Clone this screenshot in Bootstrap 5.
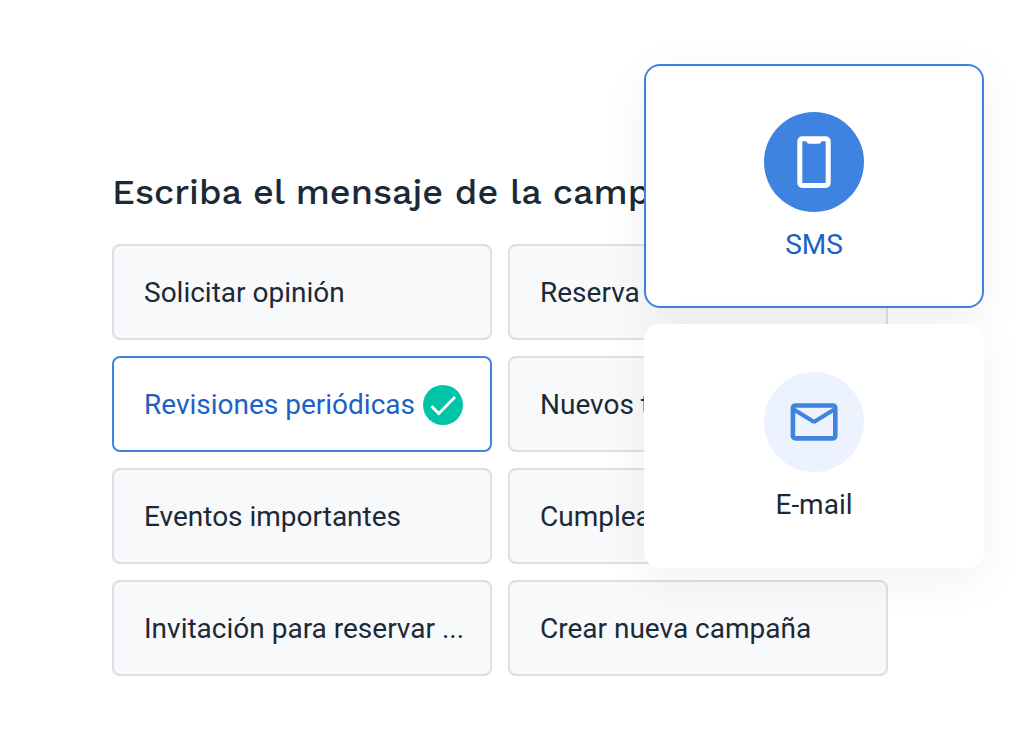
<!DOCTYPE html>
<html lang="es">
<head>
<meta charset="utf-8">
<meta name="viewport" content="width=device-width, initial-scale=1">
<title>Campaña</title>
<link href="https://cdn.jsdelivr.net/npm/bootstrap@5.3.0/dist/css/bootstrap.min.css" rel="stylesheet">
<style>
  body { font-family: Roboto, "Liberation Sans", sans-serif; color: #1c2936; background: #fff; }
  .campaign { padding: 168px 128px 72px 112px; }
  .campaign-title { font-family: "Work Sans", Inter, "Open Sans", sans-serif; color: #1c2936; font-size: 36px; line-height: 48px; font-weight: 500; margin-bottom: 28px; }
  .option { --bs-btn-color: #1c2936; --bs-btn-bg: #f8f9fb; --bs-btn-border-color: #dcdfe5;
    --bs-btn-hover-color: #1c2936; --bs-btn-hover-bg: #f1f3f7; --bs-btn-hover-border-color: #dcdfe5;
    --bs-btn-active-color: #1b62c4; --bs-btn-active-bg: #fff; --bs-btn-active-border-color: #3f83e0;
    --bs-btn-border-width: 2px; --bs-btn-border-radius: 8px;
    --bs-btn-font-size: 28px; --bs-btn-line-height: 32px; height: 96px; padding: 8px 24px 6px 30px; }
  .option .tick { width: 40px; height: 40px; }
  .channels { right: 32px; top: 64px; width: 340px; }
  .channel { --bs-btn-color: #1c2936; --bs-btn-bg: #fff; --bs-btn-border-color: #fff;
    --bs-btn-hover-color: #1c2936; --bs-btn-hover-bg: #fff; --bs-btn-hover-border-color: #3f83e0;
    --bs-btn-active-color: #1b62c4; --bs-btn-active-bg: #fff; --bs-btn-active-border-color: #3f83e0;
    --bs-btn-border-width: 2px; --bs-btn-border-radius: 16px; --bs-btn-padding-y: 46px;
    --bs-btn-font-size: 28px; --bs-btn-line-height: 34px; height: 244px; }
  .channel, .channel.active { box-shadow: 0 12px 48px rgba(0, 0, 0, .06); }
  .channel-icon { width: 100px; height: 100px; background: #ecf3fe; color: #3f83e0; }
  .channel-icon svg { display: block; }
  .channel.active .channel-icon { background: #3f83e0; color: #fff; }
</style>
</head>
<body>
<main class="position-relative">
  <section class="campaign">
    <h1 class="campaign-title text-nowrap">Escriba el mensaje de la campaña</h1>
    <div class="row row-cols-2 g-3">
      <div class="col"><button type="button" class="btn option w-100 text-start text-nowrap">Solicitar opinión</button></div>
      <div class="col"><button type="button" class="btn option w-100 text-start text-nowrap">Reserva</button></div>
      <div class="col"><button type="button" class="btn option active w-100 text-start text-nowrap d-flex align-items-center" aria-pressed="true">Revisiones periódicas
        <svg class="tick ms-2 flex-shrink-0" viewBox="0 0 40 40" aria-hidden="true"><circle cx="20" cy="20" r="20" fill="#00c4a7"/><path d="M8.5 21.2 15.8 28.5 32 12" fill="none" stroke="#fff" stroke-width="2.8"/></svg></button></div>
      <div class="col"><button type="button" class="btn option w-100 text-start text-nowrap">Nuevos tratamientos</button></div>
      <div class="col"><button type="button" class="btn option w-100 text-start text-nowrap">Eventos importantes</button></div>
      <div class="col"><button type="button" class="btn option w-100 text-start text-nowrap">Cumpleaños</button></div>
      <div class="col"><button type="button" class="btn option w-100 text-start text-nowrap">Invitación para reservar ...</button></div>
      <div class="col"><button type="button" class="btn option w-100 text-start text-nowrap">Crear nueva campaña</button></div>
    </div>
  </section>
  <aside class="channels position-absolute d-flex flex-column gap-3">
    <button type="button" class="btn channel active d-flex flex-column align-items-center gap-3" aria-pressed="true">
      <span class="channel-icon rounded-circle">
        <svg width="100" height="100" viewBox="0 0 100 100" aria-hidden="true"><rect x="35.8" y="26.8" width="28.4" height="46.7" rx="2.5" fill="none" stroke="currentColor" stroke-width="5"/><path d="M42.5 28H57.5V29.5Q57 31.8 54.5 31.8H45.5Q43 31.8 42.5 29.5Z" fill="currentColor"/></svg>
      </span>
      <span>SMS</span>
    </button>
    <button type="button" class="btn channel d-flex flex-column align-items-center gap-3">
      <span class="channel-icon rounded-circle">
        <svg width="100" height="100" viewBox="0 0 100 100" aria-hidden="true" fill="none" stroke="currentColor" stroke-width="4.6"><rect x="28.9" y="33.5" width="42.4" height="32.9" rx="2.5"/><path d="M29 37 48.5 49Q50 50 51.5 49L71 37" stroke-width="4"/></svg>
      </span>
      <span>E-mail</span>
    </button>
  </aside>
</main>
<script src="https://cdn.jsdelivr.net/npm/bootstrap@5.3.0/dist/js/bootstrap.bundle.min.js"></script>
</body>
</html>
